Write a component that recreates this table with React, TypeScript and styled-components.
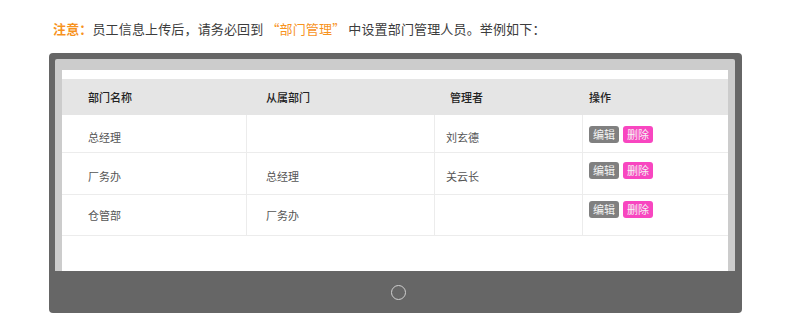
import React from "react";
import styled, { createGlobalStyle } from "styled-components";

const GlobalStyle = createGlobalStyle`
  body {
    margin: 0;
    background: #fff;
    font-family: "Noto Sans CJK SC", "Noto Sans", sans-serif;
  }
`;

const COLUMNS = "184px 188px 148px 146px";

const Page = styled.div`
  padding: 18px 0 0 49px;
`;

const Intro = styled.p`
  margin: 0;
  padding-left: 4px;
  font-size: 13px;
  line-height: 21px;
  letter-spacing: 0.15px;
  color: #3c3c3c;
`;

const Accent = styled.span<{ $bold?: boolean; $quoted?: boolean }>`
  color: #f7931e;
  font-weight: ${(p) => (p.$bold ? 700 : 400)};
  margin: ${(p) => (p.$quoted ? "0 3px" : "0")};
`;

const Monitor = styled.div`
  margin-top: 14px;
  width: 693px;
  height: 260px;
  box-sizing: border-box;
  background: #666;
  border-radius: 4px;
  padding: 6px 7px 0 6px;
  display: flex;
  flex-direction: column;
`;

const Bezel = styled.div`
  height: 212px;
  box-sizing: border-box;
  background: #ccc;
  border-radius: 2px 2px 0 0;
  padding: 11px 7px 0 7px;
`;

const Screen = styled.div`
  height: 201px;
  box-sizing: border-box;
  background: #fff;
  padding-top: 9px;
`;

const Base = styled.div`
  flex: 1;
  display: flex;
  align-items: center;
  justify-content: center;
`;

const HomeButton = styled.div`
  width: 13px;
  height: 13px;
  border: 1px solid #d0d0d0;
  border-radius: 50%;
  margin-left: 7px;
`;

const HeaderRow = styled.div`
  display: grid;
  grid-template-columns: ${COLUMNS};
  height: 36px;
  background: #e5e5e5;
`;

const HeaderCell = styled.div<{ $pad: number }>`
  display: flex;
  align-items: center;
  padding-left: ${(p) => p.$pad}px;
  font-size: 11px;
  font-weight: 500;
  color: #222;
`;

const Row = styled.div<{ $h: number }>`
  display: grid;
  grid-template-columns: ${COLUMNS};
  height: ${(p) => p.$h}px;
  box-sizing: border-box;
  border-bottom: 1px solid #ececec;
`;

const Cell = styled.div<{ $pad: number; $top: number; $first?: boolean }>`
  box-sizing: border-box;
  padding: ${(p) => p.$top}px 0 0 ${(p) => p.$pad}px;
  border-left: ${(p) => (p.$first ? "none" : "1px solid #ececec")};
  font-size: 11px;
  line-height: 14px;
  color: #555;
`;

const Actions = styled(Cell)`
  display: flex;
  align-items: flex-start;
  gap: 4px;
`;

const ActionButton = styled.span<{ $danger?: boolean }>`
  display: inline-block;
  height: 17px;
  line-height: 17px;
  padding: 0 4px;
  border-radius: 3px;
  font-size: 11px;
  color: #f4f4f4;
  background: ${(p) => (p.$danger ? "#f846c0" : "#808080")};
`;

const headers = [
  { label: "部门名称", pad: 26 },
  { label: "从属部门", pad: 20 },
  { label: "管理者", pad: 16 },
  { label: "操作", pad: 7 },
];

const rows = [
  { name: "总经理", parent: "", manager: "刘玄德", h: 38, textTop: 15, btnTop: 11 },
  { name: "厂务办", parent: "总经理", manager: "关云长", h: 42, textTop: 16, btnTop: 9 },
  { name: "仓管部", parent: "厂务办", manager: "", h: 41, textTop: 13, btnTop: 6 },
];

export default function App() {
  return (
    <>
      <GlobalStyle />
      <Page>
        <Intro>
          <Accent $bold>注意：</Accent>员工信息上传后，请务必回到
          <Accent $quoted>“部门管理”</Accent>中设置部门管理人员。举例如下：
        </Intro>
        <Monitor>
          <Bezel>
            <Screen>
              <HeaderRow>
                {headers.map((h) => (
                  <HeaderCell key={h.label} $pad={h.pad}>{h.label}</HeaderCell>
                ))}
              </HeaderRow>
              {rows.map((r) => (
                <Row key={r.name} $h={r.h}>
                  <Cell $first $pad={26} $top={r.textTop}>{r.name}</Cell>
                  <Cell $pad={19} $top={r.textTop}>{r.parent}</Cell>
                  <Cell $pad={11} $top={r.textTop}>{r.manager}</Cell>
                  <Actions $pad={6} $top={r.btnTop}>
                    <ActionButton>编辑</ActionButton>
                    <ActionButton $danger>删除</ActionButton>
                  </Actions>
                </Row>
              ))}
            </Screen>
          </Bezel>
          <Base>
            <HomeButton />
          </Base>
        </Monitor>
      </Page>
    </>
  );
}
